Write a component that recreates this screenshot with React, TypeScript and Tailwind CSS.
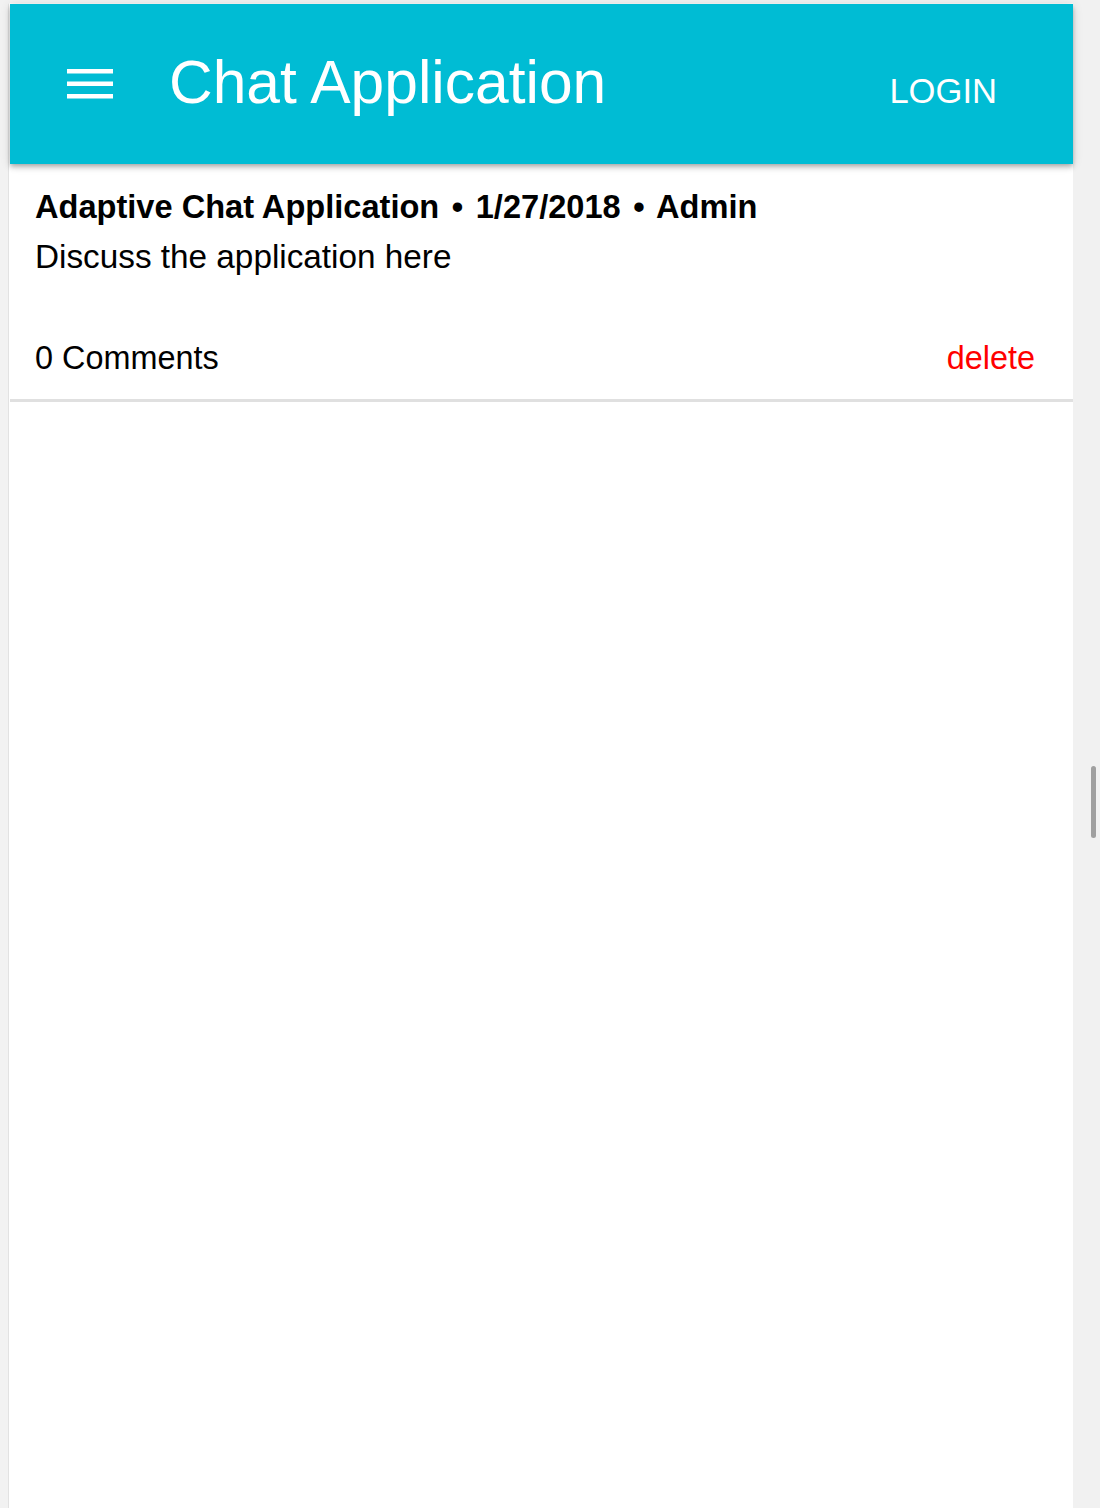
import React from 'react'

function MenuIcon() {
  return (
    <svg width="46" height="30" viewBox="0 0 46 30" fill="#ffffff" aria-hidden="true">
      <rect x="0" y="0" width="46" height="4.5" />
      <rect x="0" y="12.5" width="46" height="4.5" />
      <rect x="0" y="25" width="46" height="4.5" />
    </svg>
  )
}

function AppBar() {
  return (
    <header className="relative z-10 flex h-[160px] items-start bg-[#00bcd4] text-white shadow-[0_2px_4px_-1px_rgba(0,0,0,0.2),0_4px_5px_0_rgba(0,0,0,0.14),0_1px_10px_0_rgba(0,0,0,0.12)]">
      <button type="button" className="ml-[57px] mt-[65px]">
        <MenuIcon />
      </button>
      <h1 className="ml-[56px] mt-[48px] flex-1 text-[60.5px] leading-[60px] font-normal">Chat Application</h1>
      <button type="button" className="mr-[76px] mt-[70px] text-[34.6px] leading-[34px] uppercase">
        Login
      </button>
    </header>
  )
}

function Dot() {
  return <span className="mx-[3.5px]">•</span>
}

function TopicCard() {
  return (
    <div className="border-b-[3px] border-[#e0e0e0] pb-[21px] pl-[25px] pr-[38px] pt-[23px] text-black">
      <p className="text-[32.6px] font-bold leading-[40px]">
        Adaptive Chat Application <Dot /> 1/27/2018 <Dot /> Admin
      </p>
      <p className="mt-[10px] text-[33.3px] leading-[40px]">Discuss the application here</p>
      <div className="mt-[61px] flex items-center justify-between text-[32.4px] leading-[40px]">
        <span>0 Comments</span>
        <button type="button" className="text-[#ff0000]">
          delete
        </button>
      </div>
    </div>
  )
}

export default function App() {
  return (
    <div className="flex h-[1508px] overflow-hidden bg-[#f2f2f2] font-['Liberation_Sans',Arial,sans-serif]">
      <div className="w-[8px] shrink-0" />
      <main className="mt-[3px] flex-1 border-l border-t border-l-[#e2e2e2] border-t-[#fafafa] bg-white pl-px">
        <AppBar />
        <TopicCard />
      </main>
      <div className="relative w-[27px] shrink-0 bg-[#f1f1f1]">
        <div className="absolute left-[18px] top-[766px] h-[72px] w-[5px] rounded-full bg-[#a0a0a0]" />
      </div>
    </div>
  )
}
